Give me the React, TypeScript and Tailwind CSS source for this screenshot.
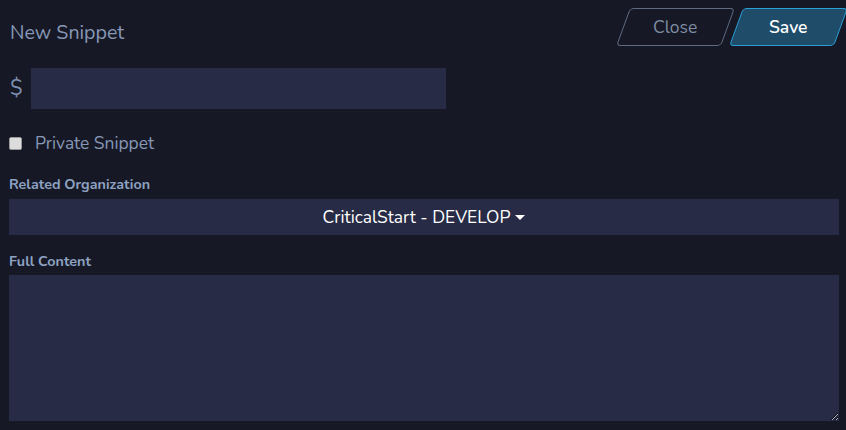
import React from "react";

export default function App() {
  const font = { fontFamily: "Nunito, Lato, 'Open Sans', sans-serif" };
  return (
    <div className="w-[846px] h-[430px] bg-[#161925] overflow-hidden" style={font}>
      <div className="flex items-start justify-between pl-[10px]">
        <div className="pt-[21px] text-[19.6px] leading-[24px] text-[#8797b6]">New Snippet</div>
        <div className="flex gap-[8px] pt-[8px] pr-[5px]">
          <button className="w-[105px] h-[38px] -skew-x-[20deg] rounded-[4px] border border-[#5f6b80] bg-transparent flex items-center justify-center">
            <span className="skew-x-[20deg] text-[17.5px] text-[#7f8ca3]">Close</span>
          </button>
          <button className="w-[105px] h-[38px] -skew-x-[20deg] rounded-[4px] border border-[#2a9fd6] bg-[#1f4c69] flex items-center justify-center">
            <span className="skew-x-[20deg] text-[17.5px] font-semibold text-white">Save</span>
          </button>
        </div>
      </div>
      <div className="flex items-center mt-[22px] pl-[10px]">
        <span className="w-[21px] text-[21px] text-[#7f91b1]">$</span>
        <input className="w-[415px] h-[41px] bg-[#272b45] outline-none" />
      </div>
      <div className="flex items-center mt-[24px] pl-[9px]">
        <span className="w-[13px] h-[13px] rounded-[2px] border border-[#9a9a9a] bg-[#dcdcdc]"></span>
        <span className="ml-[13px] text-[17.4px] leading-[20px] text-[#8797b6]">Private Snippet</span>
      </div>
      <div className="pl-[9px] pr-[7px]">
        <div className="mt-[23px] text-[14.3px] font-bold text-[#8ea2c3] leading-[18px]">Related Organization</div>
        <div className="mt-[5px] h-[36px] bg-[#272b45] flex items-center justify-center text-[17.4px] text-white">
          CriticalStart - DEVELOP
          <span className="ml-[5px] w-0 h-0 border-l-[5px] border-r-[5px] border-t-[5px] border-l-transparent border-r-transparent border-t-white"></span>
        </div>
        <div className="mt-[18px] text-[14.3px] font-bold text-[#8ea2c3] leading-[18px]">Full Content</div>
        <textarea className="mt-[4px] block w-full h-[146px] bg-[#272b45] outline-none resize-y" />
      </div>
    </div>
  );
}
